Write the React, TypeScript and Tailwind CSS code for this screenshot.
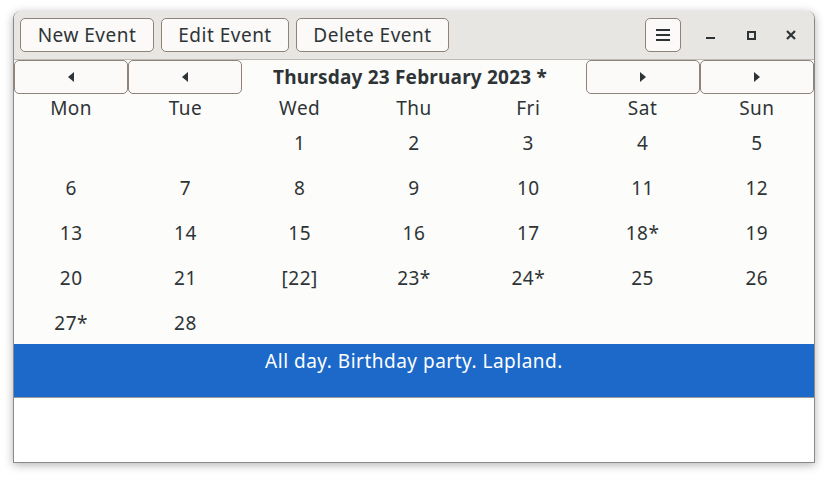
import React from "react";

const font = { fontFamily: '"Noto Sans", "Open Sans", sans-serif' };

const weekdays = ["Mon", "Tue", "Wed", "Thu", "Fri", "Sat", "Sun"];

const weeks: string[][] = [
  ["", "", "1", "2", "3", "4", "5"],
  ["6", "7", "8", "9", "10", "11", "12"],
  ["13", "14", "15", "16", "17", "18*", "19"],
  ["20", "21", "[22]", "23*", "24*", "25", "26"],
  ["27*", "28", "", "", "", "", ""],
];

function HeaderButton({ label, width }: { label: string; width: string }) {
  return (
    <button
      type="button"
      className={`h-[34px] rounded-[5px] border border-[#8e8279] bg-[#fbfaf9] text-[19px] leading-none tracking-[0.5px] text-[#2e3436] ${width}`}
    >
      {label}
    </button>
  );
}

function Arrow({ dir }: { dir: "left" | "right" }) {
  return (
    <svg width="6" height="10" viewBox="0 0 6 10" aria-hidden="true">
      {dir === "left" ? (
        <path d="M6 0 L0 5 L6 10 Z" fill="#2e3436" />
      ) : (
        <path d="M0 0 L6 5 L0 10 Z" fill="#2e3436" />
      )}
    </svg>
  );
}

function NavButton({ dir }: { dir: "left" | "right" }) {
  return (
    <button
      type="button"
      className="flex h-[34px] w-[114px] items-center justify-center rounded-[5px] border border-[#8e8279] bg-[#fbfaf9]"
    >
      <Arrow dir={dir} />
    </button>
  );
}

export default function App() {
  return (
    <div className="h-[479px] w-[828px] bg-white pl-[13px] pt-[11px]" style={font}>
      <div className="flex h-[452px] w-[802px] flex-col overflow-hidden rounded-t-[8px] border border-t-0 border-[#8a8a8a] bg-white shadow-[0_2px_10px_rgba(0,0,0,0.3)]">
        {/* Header bar */}
        <div className="flex h-[49px] shrink-0 items-center border-b border-[#bdb9b4] bg-[#e8e6e3] pl-[6px] pr-[3px]">
          <div className="flex gap-[7px]">
            <HeaderButton label="New Event" width="w-[134px]" />
            <HeaderButton label="Edit Event" width="w-[128px]" />
            <HeaderButton label="Delete Event" width="w-[153px]" />
          </div>
          <div className="flex-1" />
          <button
            type="button"
            className="flex h-[34px] w-[36px] items-center justify-center rounded-[5px] border border-[#8e8279] bg-[#fbfaf9]"
          >
            <svg width="16" height="12" viewBox="0 0 16 12" aria-hidden="true">
              <rect x="1" y="0" width="14" height="2" fill="#2e3436" />
              <rect x="1" y="5" width="14" height="2" fill="#2e3436" />
              <rect x="1" y="10" width="14" height="2" fill="#2e3436" />
            </svg>
          </button>
          <div className="ml-[10px] flex items-center">
            <div className="flex w-[40px] justify-center pt-[7px]">
              <svg width="10" height="3" viewBox="0 0 10 3" aria-hidden="true">
                <rect x="0" y="0" width="9" height="2" fill="#2e3436" />
              </svg>
            </div>
            <div className="flex w-[40px] justify-center">
              <svg width="9" height="9" viewBox="0 0 9 9" aria-hidden="true">
                <rect x="1" y="1" width="7" height="7" fill="none" stroke="#2e3436" strokeWidth="2" />
              </svg>
            </div>
            <div className="flex w-[40px] justify-center">
              <svg width="10" height="10" viewBox="0 0 10 10" aria-hidden="true">
                <path d="M1 1 L9 9 M9 1 L1 9" stroke="#2e3436" strokeWidth="2.2" />
              </svg>
            </div>
          </div>
        </div>

        {/* Calendar */}
        <div className="flex flex-col bg-[#fcfcfb] text-[#2e3436]">
          <div className="flex h-[34px] items-center">
            <NavButton dir="left" />
            <NavButton dir="left" />
            <div className="flex-1 pr-[8px] text-center text-[19px] font-bold leading-none tracking-[0.2px]">
              Thursday 23 February 2023 *
            </div>
            <NavButton dir="right" />
            <NavButton dir="right" />
          </div>
          <div className="grid h-[25px] grid-cols-7 items-center pt-[4px] text-[19px] leading-none tracking-[0.5px]">
            {weekdays.map((d) => (
              <div key={d} className="text-center">
                {d}
              </div>
            ))}
          </div>
          {weeks.map((week, i) => (
            <div
              key={i}
              className="grid h-[45px] grid-cols-7 items-center pt-[4px] text-[19px] leading-none tracking-[0.5px]"
            >
              {week.map((day, j) => (
                <div key={j} className="text-center">
                  {day}
                </div>
              ))}
            </div>
          ))}
        </div>

        {/* Events */}
        <div className="h-[54px] shrink-0 border-b border-[#9a9a9a] bg-[#1c69c9] pt-[3px] text-center text-[19px] tracking-[0.5px] text-white">
          All day. Birthday party. Lapland.
        </div>
        <div className="flex-1 bg-white" />
      </div>
    </div>
  );
}
